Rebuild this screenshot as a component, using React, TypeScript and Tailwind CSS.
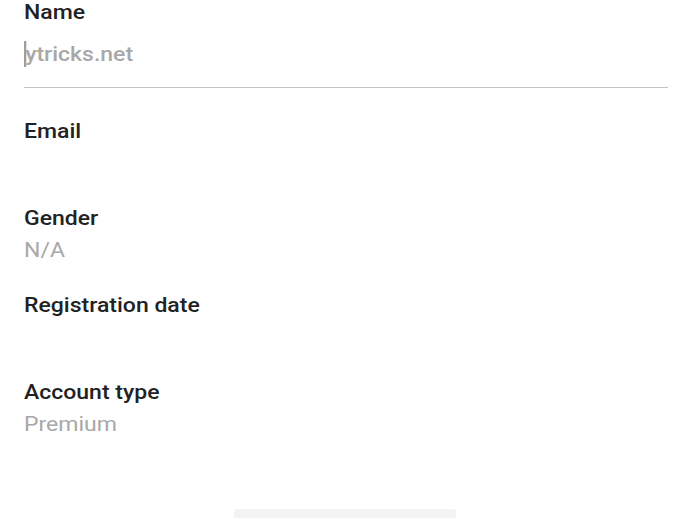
import React from 'react';

const Field = ({ label, value, className = '' }: { label: string; value?: string; className?: string }) => (
  <div className={className}>
    <div className="text-[20px] leading-[24px] font-medium text-[#222222] origin-left scale-x-[1.15]">{label}</div>
    <div className="text-[20px] leading-[24px] text-[#a8a8a8] h-[24px] mt-[8px] origin-left scale-x-[1.15]">{value}</div>
  </div>
);

export default function App() {
  return (
    <div className="w-[690px] h-[518px] bg-white overflow-hidden" style={{ fontFamily: 'Roboto, "Noto Sans", sans-serif' }}>
      <div className="px-[24px]">
        {/* Name input */}
        <div className="text-[20px] leading-[24px] font-medium text-[#222222] origin-left scale-x-[1.15]">Name</div>
        <div className="mt-[17px] flex items-center origin-left scale-x-[1.15]">
          <span className="w-[2px] h-[26px] bg-[#9e9e9e] -mr-[1px]" />
          <span className="text-[20px] leading-[24px] text-[#a8a8a8] font-medium">ytricks.net</span>
        </div>
        <div className="mt-[20px] h-[1px] bg-[#c4c4c4] mr-[-2px]" />

        <Field label="Email" className="mt-[31px]" />
        <Field label="Gender" value="N/A" className="mt-[31px]" />
        <Field label="Registration date" className="mt-[31px]" />
        <Field label="Account type" value="Premium" className="mt-[31px]" />
      </div>
      <div className="flex justify-center mt-[73px]">
        <div className="w-[222px] h-[10px] bg-[#f3f3f3] rounded-t-[3px]" />
      </div>
    </div>
  );
}
